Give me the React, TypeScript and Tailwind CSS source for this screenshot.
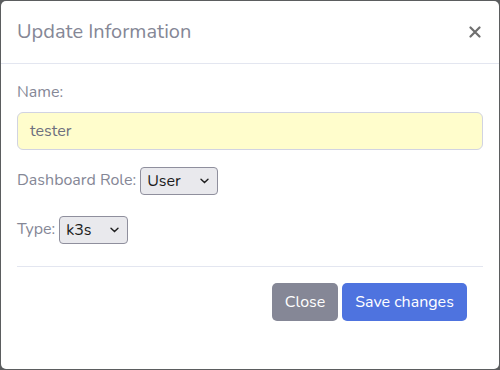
const font = { fontFamily: '"Nunito", "Lato", "Open Sans", sans-serif' };

function Chevron() {
  return (
    <svg width="9" height="6" viewBox="0 0 9 6" className="pointer-events-none absolute right-[8px] top-1/2 -translate-y-1/2">
      <path d="M1 1.2 L4.5 4.6 L8 1.2" fill="none" stroke="#1f1f1f" strokeWidth="1.4" strokeLinecap="round" />
    </svg>
  );
}

function FakeSelect({ value, width }: { value: string; width: string }) {
  return (
    <span className={`relative inline-flex h-[28px] items-center rounded-[4px] border border-[#8f8f9d] bg-[#e9e9ed] pl-[6px] text-[16px] text-[#1b1b1b] ${width}`}>
      {value}
      <Chevron />
    </span>
  );
}

export default function App() {
  return (
    <div className="h-[370px] w-[500px] bg-[#5b5d5f] p-px" style={font}>
      <div className="flex h-full flex-col rounded-[5px] bg-white">
        <div className="flex h-[63px] items-center justify-between border-b border-[#e3e6f0] px-4">
          <h5 className="text-[20px] leading-[30px] text-[#858796]">Update Information</h5>
          <svg width="12" height="12" viewBox="0 0 12 12" className="mr-[2px]">
            <path d="M1.5 1.5 L10.5 10.5 M10.5 1.5 L1.5 10.5" stroke="#6f6f6f" strokeWidth="2.2" strokeLinecap="round" />
          </svg>
        </div>
        <div className="px-4 pt-4">
          <label className="block text-[16px] leading-6 text-[#858796]">Name:</label>
          <div className="mt-2 flex h-[38px] items-center rounded-[6px] border border-[#d1d3e2] bg-[#fffdcc] px-3 text-[16px] text-[#6e707e]">
            tester
          </div>
          <div className="mt-4 flex h-[33px] items-start">
            <span className="mt-[2px] text-[16px] leading-6 text-[#858796]">Dashboard Role:</span>
            <span className="ml-[4px] mt-px">
              <FakeSelect value="User" width="w-[78px]" />
            </span>
          </div>
          <div className="mt-4 flex h-[33px] items-start">
            <span className="mt-[2px] text-[16px] leading-6 text-[#858796]">Type:</span>
            <span className="ml-[4px] mt-px">
              <FakeSelect value="k3s" width="w-[69px]" />
            </span>
          </div>
          <div className="mt-[18px] border-t border-[#e3e6f0]" />
        </div>
        <div className="flex justify-end gap-[4px] pr-[32px] pt-4">
          <button className="h-[38px] w-[66px] rounded-[5px] bg-[#858796] text-[16px] text-white">Close</button>
          <button className="h-[38px] w-[125px] rounded-[5px] bg-[#4e73df] text-[16px] text-white">Save changes</button>
        </div>
      </div>
    </div>
  );
}
